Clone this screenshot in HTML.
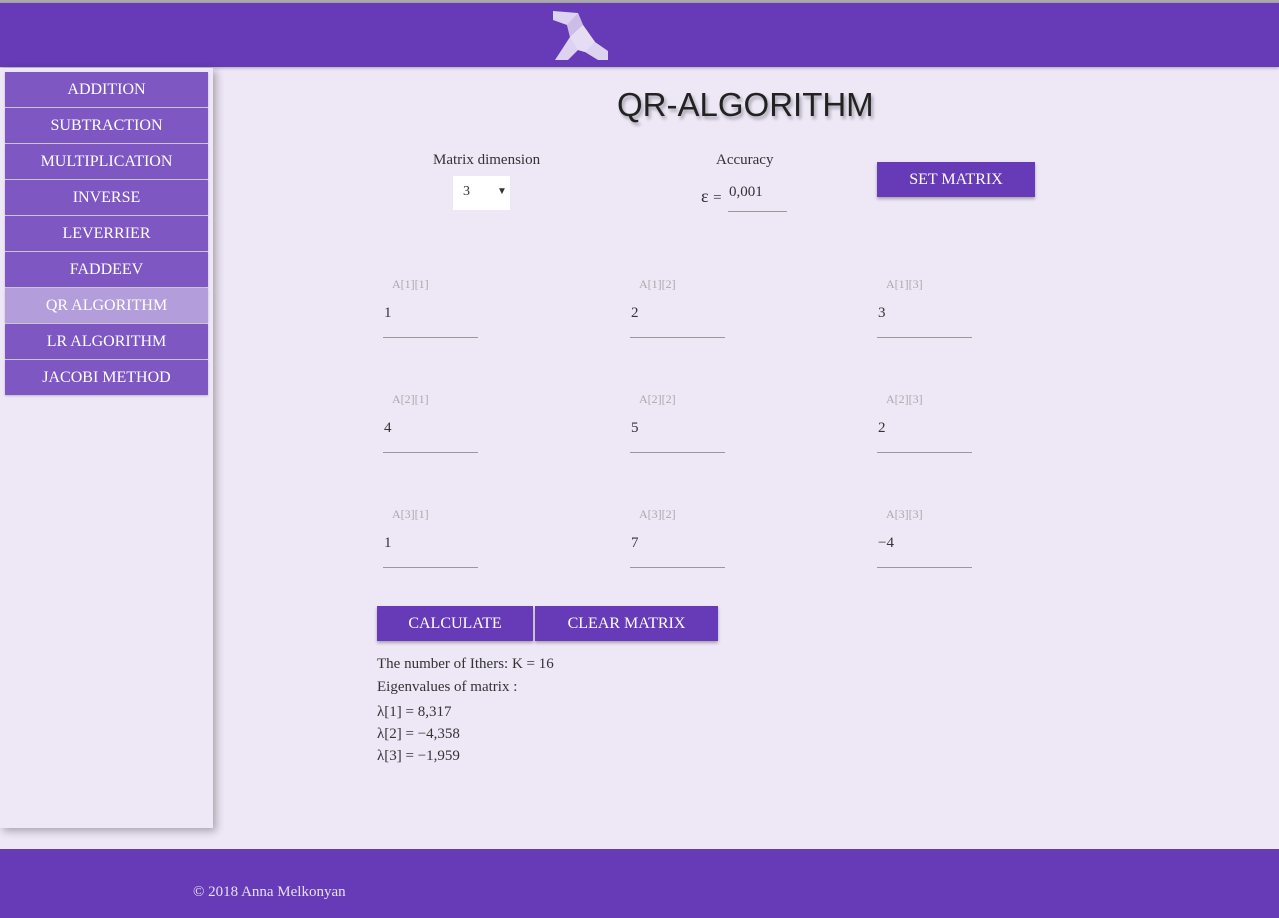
<!DOCTYPE html>
<html><head><meta charset="utf-8"><style>
*{margin:0;padding:0;box-sizing:border-box}
body{width:1279px;height:918px;background:#ede7f6;font-family:"Liberation Serif",serif;position:relative;overflow:hidden;color:#333}
.a{position:absolute}
#top{left:0;top:0;width:1279px;height:3px;background:#aaa}
#hdr{left:0;top:3px;width:1279px;height:64px;background:#673ab7;box-shadow:0 1px 3px rgba(0,0,0,.3)}
#side{left:0;top:68px;width:213px;height:760px;background:#ede7f6;box-shadow:3px 3px 8px rgba(0,0,0,.3)}
.nb{position:absolute;left:5px;width:203px;height:35px;background:#7e57c2;color:#fff;font-size:16px;text-align:center;line-height:35px;box-shadow:0 1px 2px rgba(0,0,0,.2)}
.nb.act{background:#b39ddb}
#ftr{left:0;top:849px;width:1279px;height:69px;background:#673ab7;color:#e8e0f5;font-size:15px}
.btn{position:absolute;background:#673ab7;color:#fff;font-size:16px;text-align:center;height:35px;line-height:35px;box-shadow:0 2px 3px rgba(0,0,0,.3)}
.lbl{position:absolute;font-size:12px;color:#aaa}
.val{position:absolute;font-size:15px;color:#333}
.ul{position:absolute;width:95px;height:1px;background:#999}
.t{position:absolute;font-size:15px;color:#333;white-space:nowrap}
</style></head><body>
<div class="a" id="top"></div>
<div class="a" id="hdr">
<svg class="a" style="left:545px;top:2px" width="70" height="60" viewBox="0 0 70 60">
<polygon points="8,6 33,8 38,20 50,37 63,46 63,55 53,55 40,47 33,45 23,55 10,55 25,32 22,20 8,15" fill="#ddd2f0"/>
<polygon points="33,8 38,20 25,32 22,20" fill="#cbbde6"/>
<polygon points="38,20 50,37 40,47 33,45 25,32" fill="#e6ddf5"/>
</svg>
</div>
<div class="a" id="side">
<div class="nb" style="top:4px">ADDITION</div>
<div class="nb" style="top:40px">SUBTRACTION</div>
<div class="nb" style="top:76px">MULTIPLICATION</div>
<div class="nb" style="top:112px">INVERSE</div>
<div class="nb" style="top:148px">LEVERRIER</div>
<div class="nb" style="top:184px">FADDEEV</div>
<div class="nb act" style="top:220px">QR ALGORITHM</div>
<div class="nb" style="top:256px">LR ALGORITHM</div>
<div class="nb" style="top:292px">JACOBI METHOD</div>
</div>
<div class="t" style="left:617px;top:86px;font-family:'Liberation Sans',sans-serif;font-size:33px;color:#222;text-shadow:2px 3px 3px rgba(0,0,0,.3)">QR-ALGORITHM</div>
<div class="t" style="left:433px;top:152px">Matrix dimension</div>
<div class="a" style="left:453px;top:176px;width:57px;height:34px;background:#fff;font-size:14px;line-height:32px;padding-left:10px">3<span style="position:absolute;left:44px;font-size:10px">▼</span></div>
<div class="t" style="left:716px;top:152px">Accuracy</div>
<div class="t" style="left:701px;top:186px;font-size:18px">ε <span style="font-size:15px">=</span></div>
<div class="t" style="left:729px;top:184px">0,001</div>
<div class="a" style="left:728px;top:211px;width:59px;height:1px;background:#999"></div>
<div class="btn" style="left:877px;top:162px;width:158px">SET MATRIX</div>

<div class="lbl" style="left:392px;top:277px">A[1][1]</div><div class="val" style="left:384px;top:305px">1</div><div class="ul" style="left:383px;top:337px"></div>
<div class="lbl" style="left:639px;top:277px">A[1][2]</div><div class="val" style="left:631px;top:305px">2</div><div class="ul" style="left:630px;top:337px"></div>
<div class="lbl" style="left:886px;top:277px">A[1][3]</div><div class="val" style="left:878px;top:305px">3</div><div class="ul" style="left:877px;top:337px"></div>
<div class="lbl" style="left:392px;top:392px">A[2][1]</div><div class="val" style="left:384px;top:420px">4</div><div class="ul" style="left:383px;top:452px"></div>
<div class="lbl" style="left:639px;top:392px">A[2][2]</div><div class="val" style="left:631px;top:420px">5</div><div class="ul" style="left:630px;top:452px"></div>
<div class="lbl" style="left:886px;top:392px">A[2][3]</div><div class="val" style="left:878px;top:420px">2</div><div class="ul" style="left:877px;top:452px"></div>
<div class="lbl" style="left:392px;top:507px">A[3][1]</div><div class="val" style="left:384px;top:535px">1</div><div class="ul" style="left:383px;top:567px"></div>
<div class="lbl" style="left:639px;top:507px">A[3][2]</div><div class="val" style="left:631px;top:535px">7</div><div class="ul" style="left:630px;top:567px"></div>
<div class="lbl" style="left:886px;top:507px">A[3][3]</div><div class="val" style="left:878px;top:535px">−4</div><div class="ul" style="left:877px;top:567px"></div>

<div class="btn" style="left:377px;top:606px;width:156px">CALCULATE</div>
<div class="btn" style="left:535px;top:606px;width:183px">CLEAR MATRIX</div>
<div class="t" style="left:377px;top:656px">The number of Ithers: K = 16</div>
<div class="t" style="left:377px;top:679px">Eigenvalues of matrix :</div>
<div class="t" style="left:377px;top:704px">λ[1] = 8,317</div>
<div class="t" style="left:377px;top:726px">λ[2] = −4,358</div>
<div class="t" style="left:377px;top:748px">λ[3] = −1,959</div>

<div class="a" id="ftr"><span style="position:absolute;left:193px;top:35px">© 2018 Anna Melkonyan</span></div>
</body></html>
